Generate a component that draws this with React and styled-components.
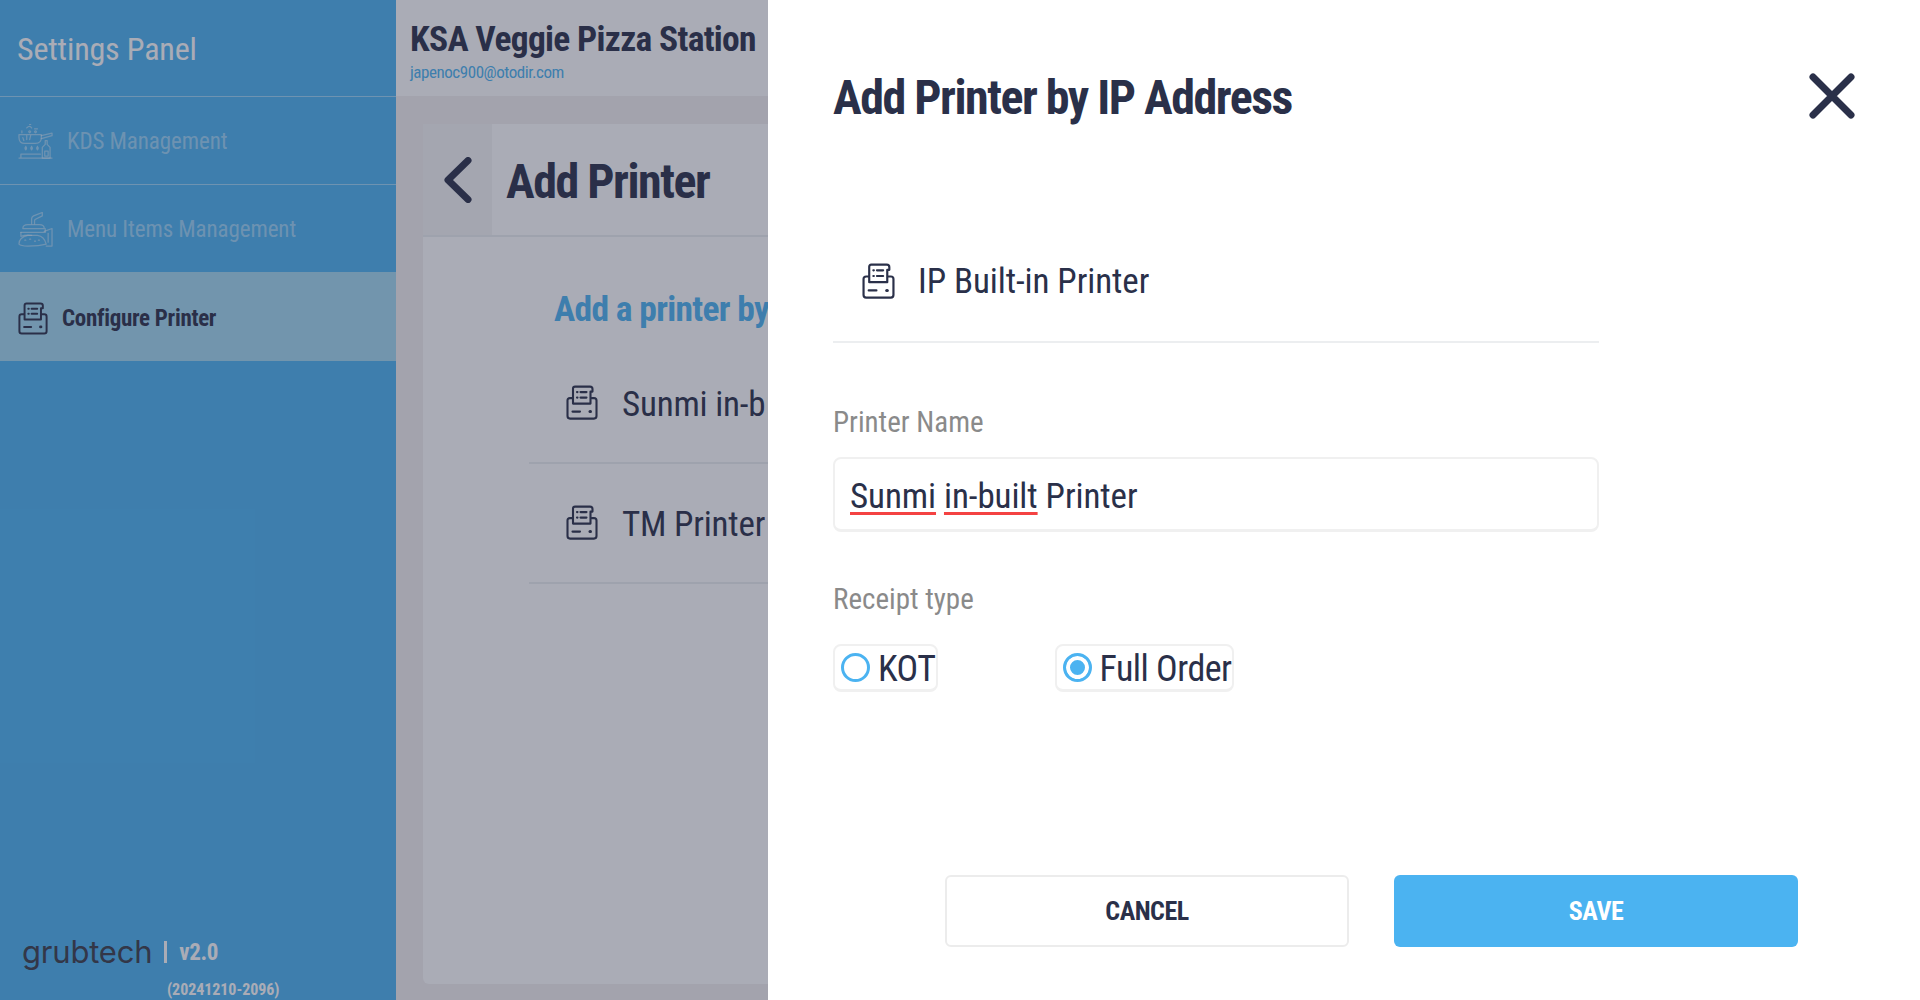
import styled, { createGlobalStyle } from "styled-components"

const ink = "#2a3049"
const blue = "#4bb3f1"

const GlobalStyle = createGlobalStyle`
	html, body {
		margin: 0;
		height: 100%;
		overflow: hidden;
		font-family: "Roboto", "Liberation Sans", sans-serif;
		font-stretch: 75%;
		color: ${ink};
	}
	* {
		box-sizing: border-box;
	}
`

const PrinterIcon = ({ size = 32 }) => (
	<svg width={size} height={size * 1.1} viewBox="0 0 32 35" fill="none" stroke="currentColor" strokeWidth="2.1" strokeLinecap="round" strokeLinejoin="round">
		<path d="M6.5 13 H4 Q1.5 13 1.5 15.5 V31 Q1.5 33.5 4 33.5 H28 Q30.5 33.5 30.5 31 V15.5 Q30.5 13 28 13 H25.5" />
		<path d="M7 18.5 V3.5 Q7 1.5 9 1.5 H24 Q26.5 1.5 26.5 4 V6.5 H24.5 V18.5 Z" />
		<path d="M11 7 H11.5 M14.5 7 H20.5 M11 12.5 H11.5 M14.5 12.5 H20.5" />
		<path d="M6.5 26.5 H14" />
		<path d="M24 26.5 H24.5" strokeWidth="3" />
	</svg>
)

const KitchenIcon = () => (
	<svg width="35" height="35" viewBox="0 0 36 36" fill="none" stroke="currentColor" strokeWidth="1.3" strokeLinecap="round" strokeLinejoin="round">
		<path d="M1 11 H24 V14 Q24 20 18 20 H7 Q1 20 1 14 Z" />
		<path d="M24 12 L35 9.5 V12 L24 15" />
		<path d="M9 4 Q12 1 14 4 M17 5 H20 M12 0.5 H13 M4 9 V7 M11 8 Q12 6 13 8 Q12 10 11 8 M17 8 Q18 6 19 8 Q18 10 17 8" />
		<path d="M5 14 L6 17 M9 12 V16 M13 12 L12 16" />
		<path d="M8 23 Q6.5 25 8 26.5 Q9.5 25 8 23 M14 23 Q12.5 25 14 26.5 Q15.5 25 14 23 M20 23 Q18.5 25 20 26.5 Q21.5 25 20 23" />
		<path d="M1 35 H35 M3 35 V31 H23" />
		<path d="M30 17 V21 L33 24 V35 H25 V24 L28 21 V17 Z" />
		<path d="M27.5 28 H31 V33 H27.5 Z" />
	</svg>
)

const MenuIcon = () => (
	<svg width="35" height="35" viewBox="0 0 36 36" fill="none" stroke="currentColor" strokeWidth="1.3" strokeLinecap="round" strokeLinejoin="round">
		<path d="M14 12 V7 Q14 5 16 4 L25 0.5 V4 L18 7.5 Q17 8 17 9 V12" />
		<path d="M5 17 Q5 13 10 13 H22 Q27 13 27 17 H5 Z" />
		<path d="M3 21 H28 V17" />
		<path d="M3 21 V25 Q8 23 14 24" />
		<path d="M1 33 Q1 26 10 24 H20 Q27 25 29 33 Q22 35 10 35 Q3 35 1 33 Z" />
		<path d="M7 29 H8 M12 28 H13 M17 30 H18 M21 29 H22" />
		<path d="M27 20 L35 17 V35 H29" />
		<path d="M31 22 V31" />
	</svg>
)

const Chevron = () => (
	<svg width="28" height="46" viewBox="0 0 28 46" fill="none" stroke="currentColor" strokeWidth="7" strokeLinecap="round" strokeLinejoin="round">
		<path d="M24 3.5 L4 23 L24 42.5" />
	</svg>
)

const CloseIcon = () => (
	<svg width="48" height="48" viewBox="0 0 48 48" fill="none" stroke="currentColor" strokeWidth="7" strokeLinecap="round">
		<path d="M5 5 L43 43 M43 5 L5 43" />
	</svg>
)

const sideItems = [
	{ label: "KDS Management", icon: <KitchenIcon /> },
	{ label: "Menu Items Management", icon: <MenuIcon /> },
]

const printers = ["Sunmi in-built Printer", "TM Printer"]

const App = () => {
	return (
		<Page>
			<GlobalStyle />
			<Sidebar>
				<SideTitle>Settings Panel</SideTitle>
				{sideItems.map((item) => (
					<SideItem key={item.label}>
						{item.icon}
						<span>{item.label}</span>
					</SideItem>
				))}
				<ActiveItem>
					<PrinterIcon size={30} />
					<span>Configure Printer</span>
				</ActiveItem>
				<SideFooter>
					<LogoRow>
						<Logo>grubtech</Logo>
						<Divider />
						<Version>v2.0</Version>
					</LogoRow>
					<Build>(20241210-2096)</Build>
				</SideFooter>
			</Sidebar>

			<Main>
				<TopBar>
					<StoreName>KSA Veggie Pizza Station</StoreName>
					<Email>japenoc900@otodir.com</Email>
				</TopBar>
				<Card>
					<CardHeader>
						<BackTab>
							<Chevron />
						</BackTab>
						<CardTitle>Add Printer</CardTitle>
					</CardHeader>
					<CardBody>
						<SectionTitle>Add a printer by IP Address</SectionTitle>
						{printers.map((name) => (
							<PrinterRow key={name}>
								<PrinterIcon />
								<PrinterName>{name}</PrinterName>
							</PrinterRow>
						))}
					</CardBody>
				</Card>
			</Main>

			<Scrim />

			<Modal>
				<ModalHeader>
					<ModalTitle>Add Printer by IP Address</ModalTitle>
					<CloseIcon />
				</ModalHeader>
				<ModalBody>
					<TypeRow>
						<PrinterIcon size={33} />
						<span>IP Built-in Printer</span>
					</TypeRow>
					<FieldLabel $top={60}>Printer Name</FieldLabel>
					<NameInput>
						<Misspelt>Sunmi</Misspelt> <Misspelt>in-built</Misspelt> Printer
					</NameInput>
					<FieldLabel $top={48}>Receipt type</FieldLabel>
					<RadioRow>
						<RadioChip>
							<RadioDot />
							KOT
						</RadioChip>
						<RadioChip>
							<RadioDot $checked />
							Full Order
						</RadioChip>
					</RadioRow>
				</ModalBody>
				<ModalFooter>
					<Button>CANCEL</Button>
					<Button $primary>SAVE</Button>
				</ModalFooter>
			</Modal>
		</Page>
	)
}

const Page = styled.div`
	position: relative;
	display: flex;
	height: 1000px;
	width: 1920px;
	overflow: hidden;
	background: #f3f0f1;
`

const Sidebar = styled.aside`
	width: 396px;
	flex: none;
	display: flex;
	flex-direction: column;
	background: ${blue};
	color: #fff;
`

const SideTitle = styled.div`
	height: 97px;
	padding: 2px 17px 0;
	display: flex;
	align-items: center;
	font-size: 32px;
	letter-spacing: -0.15px;
	border-bottom: 1px solid rgba(255, 255, 255, 0.45);
`

const SideItem = styled.div`
	height: 88px;
	padding: 1px 18px 0;
	display: flex;
	align-items: center;
	gap: 14px;
	font-size: 23px;
	letter-spacing: -0.08px;
	color: rgba(255, 255, 255, 0.45);
	border-bottom: 1px solid rgba(255, 255, 255, 0.45);
	&:nth-of-type(3) {
		height: 87px;
		border-bottom: 0;
	}
`

const ActiveItem = styled.div`
	height: 89px;
	padding: 3px 18px 0;
	display: flex;
	align-items: center;
	gap: 14px;
	font-size: 23px;
	letter-spacing: -0.3px;
	font-weight: 700;
	color: ${ink};
	background: #a2d9f1;
`

const SideFooter = styled.div`
	margin-top: auto;
	padding: 0 0 1px 22px;
`

const LogoRow = styled.div`
	display: flex;
	align-items: center;
	gap: 12px;
`

const Logo = styled.div`
	font-family: "Inter", sans-serif;
	font-stretch: normal;
	font-size: 31px;
	letter-spacing: -0.2px;
	line-height: 40px;
	color: #3a3c48;
`

const Divider = styled.div`
	width: 3px;
	height: 22px;
	background: #fff;
`

const Version = styled.div`
	font-size: 23px;
	font-weight: 700;
	letter-spacing: -0.4px;
	color: #fff;
`

const Build = styled.div`
	margin: 8px 0 0 145px;
	font-size: 16px;
	line-height: 19px;
	letter-spacing: -0.05px;
	font-weight: 700;
	color: #fff;
`

const Main = styled.main`
	flex: none;
	width: 372px;
	overflow: hidden;
`

const TopBar = styled.div`
	height: 96px;
	padding-top: 18px;
	padding-left: 14px;
	background: #fff;
`

const StoreName = styled.div`
	font-size: 35.5px;
	line-height: 42px;
	letter-spacing: -0.7px;
	font-weight: 700;
	white-space: nowrap;
`

const Email = styled.div`
	font-size: 17px;
	line-height: 20px;
	letter-spacing: -0.45px;
	margin-top: 2px;
	color: ${blue};
`

const Card = styled.section`
	margin: 28px 0 0 27px;
	width: 900px;
	height: 860px;
	background: #fff;
	border-radius: 6px;
`

const CardHeader = styled.div`
	height: 113px;
	display: flex;
	align-items: stretch;
	border-bottom: 2px solid #eceef0;
`

const BackTab = styled.div`
	width: 69px;
	display: flex;
	align-items: center;
	justify-content: center;
	background: #f6f6f6;
	color: ${ink};
`

const CardTitle = styled.h2`
	margin: 4px 0 0 14px;
	font-size: 48px;
	letter-spacing: -1.5px;
	font-weight: 700;
	align-self: center;
	white-space: nowrap;
`

const CardBody = styled.div`
	padding: 51px 0 0 106px;
`

const SectionTitle = styled.h3`
	margin: 0 0 14px 25px;
	font-size: 35.5px;
	line-height: 42px;
	letter-spacing: -0.7px;
	font-weight: 700;
	color: ${blue};
	white-space: nowrap;
`

const PrinterRow = styled.div`
	height: 120px;
	display: flex;
	align-items: center;
	gap: 24px;
	padding-left: 37px;
	font-size: 35px;
	letter-spacing: -0.2px;
	white-space: nowrap;
	border-bottom: 2px solid #eceef0;
`

/* the modal covers everything past this width */
const PrinterName = styled.span`
	max-width: 145px;
	overflow: hidden;
	padding-top: 3px;
`

const Scrim = styled.div`
	position: absolute;
	inset: 0;
	background: rgba(42, 48, 73, 0.4);
`

const Modal = styled.div`
	position: absolute;
	top: 0;
	right: 0;
	bottom: 0;
	width: 1152px;
	background: #fff;
	display: flex;
	flex-direction: column;
`

const ModalHeader = styled.div`
	height: 216px;
	display: flex;
	justify-content: space-between;
	padding: 72px 64px 0 65px;
`

const ModalTitle = styled.h1`
	margin: -4px 0 0;
	font-size: 48px;
	line-height: 60px;
	letter-spacing: -1.5px;
	font-weight: 700;
`

const ModalBody = styled.div`
	width: 831px;
	padding-left: 65px;
	flex: 1;
`

const TypeRow = styled.div`
	height: 127px;
	display: flex;
	align-items: center;
	gap: 23px;
	padding: 5px 0 0 29px;
	font-size: 35px;
	letter-spacing: -0.08px;
	border-bottom: 2px solid #eceef0;
`

const FieldLabel = styled.div`
	margin-top: ${(p) => p.$top}px;
	font-size: 29px;
	line-height: 38px;
	color: #8a8a8a;
`

const NameInput = styled.div`
	margin-top: 16px;
	height: 75px;
	padding-left: 15px;
	font-size: 35px;
	line-height: 75px;
	letter-spacing: -0.08px;
	border: 2px solid #f0f0f0;
	border-bottom-width: 3px;
	border-radius: 8px;
`

const Misspelt = styled.span`
	text-decoration: underline solid #f44242 3px;
	text-underline-offset: 4px;
`

const RadioRow = styled.div`
	margin-top: 26px;
	display: flex;
	gap: 117px;
`

const RadioChip = styled.div`
	height: 48px;
	padding: 3px 0 0 6px;
	display: flex;
	align-items: center;
	gap: 8px;
	font-size: 36px;
	letter-spacing: -0.5px;
	border: 2px solid #f0f0f0;
	border-bottom-width: 3px;
	border-radius: 8px;
`

const RadioDot = styled.span`
	width: 29px;
	height: 29px;
	margin-top: -4px;
	border-radius: 50%;
	border: 3px solid ${blue};
	background: ${(p) => (p.$checked ? blue : "transparent")};
	box-shadow: ${(p) => (p.$checked ? "inset 0 0 0 4px #fff" : "none")};
`

const ModalFooter = styled.div`
	display: flex;
	gap: 45px;
	padding: 0 0 53px 177px;
`

const Button = styled.button`
	flex: none;
	width: 404px;
	height: 72px;
	font-family: inherit;
	font-stretch: 75%;
	font-size: 26px;
	letter-spacing: -0.5px;
	font-weight: 700;
	color: ${(p) => (p.$primary ? "#fff" : ink)};
	background: ${(p) => (p.$primary ? blue : "#fff")};
	border: ${(p) => (p.$primary ? "0" : "2px solid #ececec")};
	border-radius: 6px;
`

export default App
